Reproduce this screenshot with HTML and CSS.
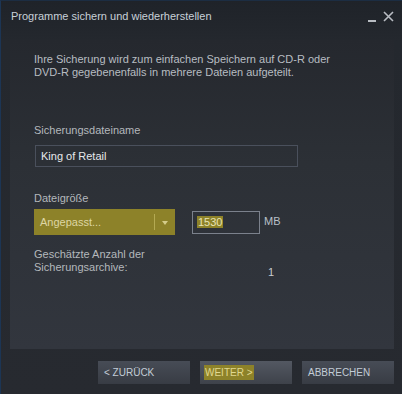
FILE: index.html
```html
<!DOCTYPE html>
<html lang="de">
<head>
    <meta charset="UTF-8">
    <title>Programme sichern und wiederherstellen</title>
    <link rel="stylesheet" href="styles.css">
</head>
<body>
    <div class="window">
        <div class="titlebar">
            <span class="title">Programme sichern und wiederherstellen</span>
            <div class="controls">
                <span class="minimize"></span>
                <svg class="close" width="11" height="11" viewBox="0 0 11 11">
                    <path d="M1 1 L10 10 M10 1 L1 10" stroke="#b8bcc2" stroke-width="1.6" fill="none"/>
                </svg>
            </div>
        </div>
        <div class="panel">
            <p class="intro">Ihre Sicherung wird zum einfachen Speichern auf CD-R oder<br>DVD-R gegebenenfalls in mehrere Dateien aufgeteilt.</p>

            <label class="label name-label">Sicherungsdateiname</label>
            <div class="text-input">King of Retail</div>

            <label class="label size-label">Dateigröße</label>
            <div class="size-row">
                <div class="dropdown">
                    <span class="dropdown-text">Angepasst...</span>
                    <span class="dropdown-sep"></span>
                    <span class="dropdown-arrow"></span>
                </div>
                <div class="num-input"><span class="selected">1530</span></div>
                <span class="unit">MB</span>
            </div>

            <div class="archives">
                <span class="label">Geschätzte Anzahl der<br>Sicherungsarchive:</span>
                <span class="count">1</span>
            </div>
        </div>
        <div class="buttons">
            <button class="btn">&lt; ZURÜCK</button>
            <button class="btn btn-default"><span class="selected">WEITER &gt;</span></button>
            <button class="btn">ABBRECHEN</button>
        </div>
    </div>
</body>
</html>
```

FILE: styles.css
```css
body {
    margin: 0;
    padding: 0;
    background-color: #262a30;
    font-family: "Liberation Sans", Arial, sans-serif;
}
.window {
    width: 402px;
    height: 394px;
    box-sizing: border-box;
    border-left: 1px solid #1c3554;
    border-top: 1px solid #1c2d42;
    background: linear-gradient(#1f2329 0px, #24282e 40px, #272a30 394px);
    display: flex;
    flex-direction: column;
}
.titlebar {
    height: 39px;
    display: flex;
    justify-content: space-between;
    padding: 7px 8px 0 10px;
    box-sizing: border-box;
}
.title {
    font-size: 11px;
    line-height: 16px;
    color: #c8d0d8;
}
.controls {
    display: flex;
    align-items: flex-start;
    padding-top: 3px;
}
.minimize {
    width: 8px;
    height: 2px;
    background-color: #b8bcc2;
    margin-top: 9px;
    margin-right: 7px;
}
.panel {
    margin: 0 8px 0 9px;
    height: 309px;
    box-sizing: border-box;
    padding: 13px 0 0 24px;
    background: linear-gradient(#25282e, #2c3036 40%, #32363e);
    display: flex;
    flex-direction: column;
}
.intro {
    margin: 0;
    font-size: 11px;
    line-height: 12.5px;
    color: #b8bdc2;
}
.label {
    font-size: 11px;
    line-height: 12.5px;
    color: #b4b8bc;
}
.name-label {
    margin-top: 46px;
}
.text-input {
    margin-top: 8px;
    margin-left: 1px;
    width: 263px;
    height: 22px;
    box-sizing: border-box;
    border: 1px solid #4a505c;
    padding: 4px 0 0 5px;
    font-size: 11px;
    line-height: 13px;
    color: #e6e9ec;
}
.size-label {
    margin-top: 25px;
}
.size-row {
    margin-top: 5px;
    display: flex;
    align-items: center;
}
.dropdown {
    width: 141px;
    height: 26px;
    background-color: #8d8229;
    display: flex;
    align-items: center;
    box-sizing: border-box;
    padding-left: 6px;
}
.dropdown-text {
    flex-grow: 1;
    font-size: 11px;
    color: #ddd6a4;
}
.dropdown-sep {
    width: 1px;
    height: 16px;
    background-color: #b4aa52;
}
.dropdown-arrow {
    width: 0;
    height: 0;
    border-left: 3.5px solid transparent;
    border-right: 3.5px solid transparent;
    border-top: 4px solid #d4cc8a;
    margin: 2px 7px 0 7px;
}
.num-input {
    margin-left: 17px;
    width: 68px;
    height: 23px;
    box-sizing: border-box;
    border: 1px solid #7b818c;
    padding: 4px 0 0 4px;
    font-size: 11px;
    line-height: 12px;
}
.selected {
    background-color: #8d8229;
    color: #e8e2b4;
    padding: 0 1px;
}
.unit {
    margin-left: 4px;
    margin-top: -3px;
    font-size: 11px;
    color: #b8c0c8;
}
.archives {
    margin-top: 13px;
    display: flex;
}
.archives .label {
    line-height: 13px;
    width: 234px;
}
.count {
    margin-top: 18px;
    font-size: 11px;
    line-height: 13px;
    color: #c8ccd0;
}
.buttons {
    display: flex;
    justify-content: flex-end;
    gap: 10px;
    padding: 12px 8px 0 0;
}
.btn {
    width: 92px;
    height: 23px;
    border: none;
    padding: 0 0 0 6px;
    text-align: left;
    font-family: "Liberation Sans", Arial, sans-serif;
    font-size: 10px;
    color: #c2ccd6;
    background: linear-gradient(#474c56, #383c44);
    cursor: pointer;
}
.btn-default {
    padding-left: 4px;
    background: linear-gradient(#535862, #3e424a);
}
.btn-default .selected {
    display: inline-block;
    padding: 2px 1px 2px 1px;
    line-height: 11px;
    color: #e0d890;
}
```
